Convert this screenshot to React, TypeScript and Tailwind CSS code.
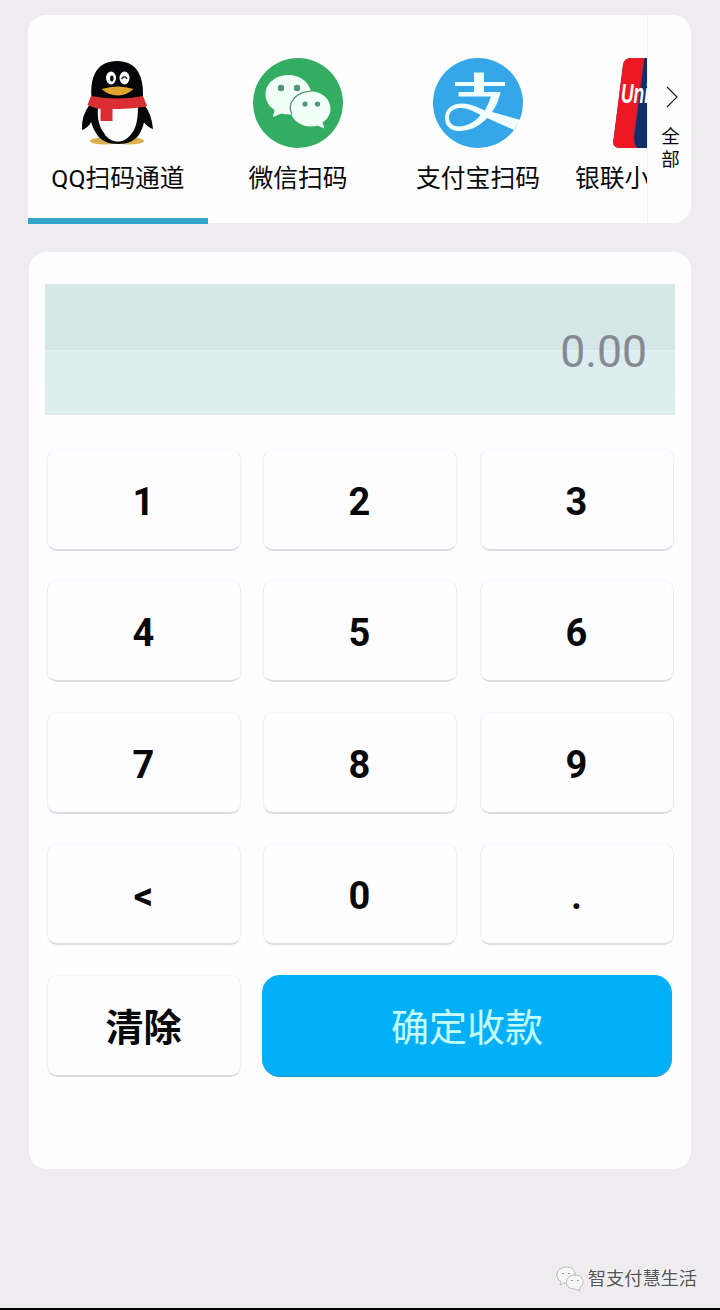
import { type ReactNode } from "react";
import clsx from "clsx";

function QQIcon() {
  return (
    <svg viewBox="0 0 90 90" className="size-[90px]">
      <ellipse cx="32" cy="83" rx="15" ry="3.6" fill="#d9b04c" />
      <ellipse cx="56" cy="83" rx="15" ry="3.6" fill="#d9b04c" />
      <path d="M17 46Q8 58 9 72Q14 71 19 63L28 50ZM71 46Q79 57 80 71Q75 70 69 62L62 50Z" fill="#060608" />
      <path d="M18.500 39C17 17 25 3 44 3S71 17 70 39C73 54 73 64 67 75C63 83 54 86 45 86S27 83 23 75C16 64 16 54 18.500 39Z" fill="#060608" />
      <path d="M25 49H65C65 61 63 70 59 75C55 81 50 83.500 45 83.500S34 81 31 75C26 69 24 60 25 49Z" fill="#fdfdfd" />
      <ellipse cx="38" cy="20" rx="5" ry="6.500" fill="#fff" />
      <ellipse cx="51.500" cy="20" rx="5" ry="6.500" fill="#fff" />
      <ellipse cx="38.800" cy="20.500" rx="1.800" ry="3" fill="#111" />
      <path d="M48.500 21Q51.500 16.500 54 21" fill="none" stroke="#222" strokeWidth="1.500" />
      <path d="M28.500 31Q45 26 60.500 31Q54 37 45 37.500Q35 37 28.500 31Z" fill="#e1a22e" />
      <path d="M18 38Q45 43 70 38L74 48Q64 51 39.500 51V63H27.500V51Q21 50 14.500 47Z" fill="#d92e34" />
    </svg>
  );
}

function WechatIcon() {
  return (
    <svg viewBox="0 0 90 90" className="size-[90px]">
      <circle cx="45" cy="45" r="45" fill="#33ad62" />
      <path d="M35.500 17C22.500 17 12.500 25.500 12.500 36.500C12.500 43 16 48.500 21.500 52L20 59L28.500 55.500Q32 56.700 39 56.500A22 18 0 0 1 58.300 34C56 24 47 17 35.500 17Z" fill="#f1fff9" />
      <path d="M58 33.500C46.500 33.500 37.500 41 37.500 51S46.500 68.500 58 68.500Q61.500 68.500 64.500 67.500L71.500 70.500L69.500 64.500C74.500 61 77.500 56.500 77.500 51C77.500 41 69 33.500 58 33.500Z" fill="#f1fff9" />
      <path d="M39 56Q34.500 48 41 40.500Q48 33 58 33.500" fill="none" stroke="#5a9575" strokeWidth="1.300" />
      <g fill="#56937a">
        <circle cx="28" cy="30" r="3.200" />
        <circle cx="44" cy="30" r="3.200" />
        <circle cx="52" cy="46" r="2.600" />
        <circle cx="64.500" cy="46" r="2.600" />
      </g>
    </svg>
  );
}

function AlipayIcon() {
  return (
    <svg viewBox="0 0 90 90" className="size-[90px]">
      <circle cx="45" cy="45" r="45" fill="#35a6e8" />
      <path d="M41 14.500H51V24H72V28H51V34H67.500Q65 46 59 54L87.500 62L81 72L54 60C46 69 36 73 26 73C17 73 12 67.500 12 60C12 51 19 45.500 29 45.500C38 45.500 45 49.500 52 52.500Q56 45 58 38.500H25.500V34H41V28H22V24H41Z" fill="#f1ffff" />
      <path d="M47.500 57C40 53 34 49.800 27 50C20 50.500 16 54 16 60C16 65 20 68.500 26 68.500C34.500 68 42 64 47.500 57Z" fill="#35a6e8" />
    </svg>
  );
}

function UnionPayIcon() {
  return (
    <svg viewBox="0 0 36 90" className="h-[90px] w-9">
      <path d="M18 0H36V90H7Q-1 90 0.500 82L10 7Q11 0 18 0Z" fill="#102f69" />
      <path d="M18 0H31Q31 2 30 8L21 77Q20 87 24 90H7Q-1 90 0.500 82L10 7Q11 0 18 0Z" fill="#ed1822" />
      <path d="M31 0L30 8L21 77Q20 87 24 90" fill="none" stroke="#9d294d" strokeWidth="1" />
      <text x="8" y="44.500" fill="white" fontSize="28" fontWeight="700" fontStyle="italic" fontFamily="Liberation Sans, sans-serif" textLength="28" lengthAdjust="spacingAndGlyphs">
        Uni
      </text>
    </svg>
  );
}

const channels = [
  { name: "QQ扫码通道", icon: <QQIcon />, active: true },
  { name: "微信扫码", icon: <WechatIcon /> },
  { name: "支付宝扫码", icon: <AlipayIcon /> },
];

const keys = ["1", "2", "3", "4", "5", "6", "7", "8", "9", "<", "0", "."];

function ChannelTabs() {
  return (
    <div className="ml-7 mr-[29px] flex h-[209px]">
      <div className="flex h-[208px] w-[619px] rounded-tl-[18px] bg-[#fefefe]">
        {channels.map((channel) => (
          <button
            key={channel.name}
            className={clsx(
              "flex h-[209px] w-[180px] shrink-0 flex-col items-center border-b-[6px] pt-[43px]",
              channel.active ? "border-[#30a5c5]" : "border-transparent",
            )}
          >
            {channel.icon}
            <span className="mt-[15px] text-[24.800px] leading-8 whitespace-nowrap">{channel.name}</span>
          </button>
        ))}
        <button className="flex h-[208px] w-[79px] shrink-0 flex-col overflow-hidden pt-[43px]">
          <div className="ml-[45px]">
            <UnionPayIcon />
          </div>
          <span className="ml-[7px] mt-[15px] text-[24.800px] leading-8 whitespace-nowrap">银联小</span>
        </button>
      </div>
      <button className="flex h-[208px] flex-1 flex-col items-center rounded-r-[18px] border-l border-[#f0eff1] bg-[#fefefe] pt-[71px] pl-[2px]">
        <svg viewBox="0 0 12 22" className="ml-[3px] h-[22px] w-3" fill="none" stroke="#222" strokeWidth="1.2">
          <path d="M1 1L11 11L1 21" />
        </svg>
        <span className="mt-[18px] w-[19px] text-[18.500px] leading-[23px]">全部</span>
      </button>
    </div>
  );
}

function Key({ children }: { children: ReactNode }) {
  return (
    <button className="h-[102px] w-[194px] rounded-[10px] border border-t-[#f8f7f9] border-x-[#ededf0] border-b-2 border-b-[#dddde0] bg-[#fefdff] pr-px pt-[6px] text-[38px] font-bold">
      {children}
    </button>
  );
}

function Keypad() {
  return (
    <div className="mx-[29px] mt-7 h-[917px] rounded-[18px] bg-[#fefdff] px-4 pt-8">
      <div className="flex h-[131px] items-center justify-end border-b border-[#e3eaed] bg-[linear-gradient(#d4e8e5_0,#d5e6e8_66px,#e4f2f4_66px,#ddedef_68px,#dceef0_100%)] pr-7 pt-[6px] text-[44.500px] text-[#848a92]">
        0.00
      </div>
      <div className="ml-[2px] mt-[33.500px] grid grid-cols-[193.500px_194.500px_194px] gap-x-[22.500px] gap-y-[29.500px]">
        {keys.map((key) => (
          <Key key={key}>{key}</Key>
        ))}
        <Key>清除</Key>
        <button className="col-span-2 -ml-px h-[102px] w-[410px] rounded-[18px] border-b border-[#2794c4] bg-[#03b0f7] pt-[6px] text-[38px] text-[#c5ffff]">
          确定收款
        </button>
      </div>
    </div>
  );
}

function Watermark() {
  return (
    <div className="mt-auto flex items-center gap-1 self-end pb-4 pr-[23px]">
      <svg viewBox="0 0 28 26" className="h-[26px] w-7" fill="#f8f7f8" stroke="#aaa9ab" strokeWidth="0.800">
        <path d="M10 1C5 1 1 4.500 1 9C1 12 2.500 14.300 5 15.600L4 19L8 17H12C20 17 20 10 19 7C18 3 14.500 1 10 1Z" />
        <path d="M19 9C14 9 10.500 12 10.500 16.500S14 23 19 23L24 25L23.500 21.500C26 20 27 18.500 27 16C27 12 23.500 9 19 9Z" />
        <path d="M7 7V8M13 7V8M16 14V15M22 14V15" stroke="#777" strokeWidth="1.500" />
      </svg>
      <span className="text-[18.200px] leading-6 text-[#555456] [text-shadow:-1px_-1px_1px_white]">智支付慧生活</span>
    </div>
  );
}

export default function App() {
  return (
    <div className="flex h-[1310px] w-[720px] flex-col overflow-hidden border-b-2 border-black bg-[#eeecef] pt-[15px] font-['Roboto','Noto_Sans_CJK_SC',sans-serif] text-[#08080a]">
      <ChannelTabs />
      <Keypad />
      <Watermark />
    </div>
  );
}
